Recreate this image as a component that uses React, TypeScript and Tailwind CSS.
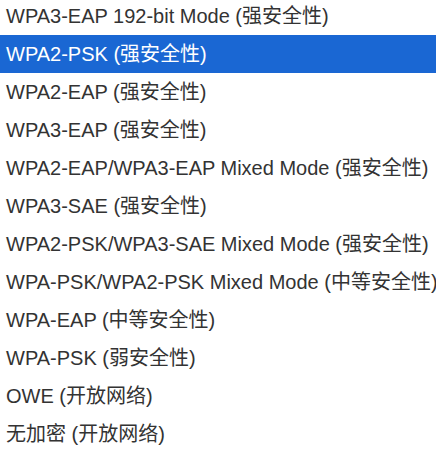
import React from 'react';

const options = [
  'WPA3-EAP 192-bit Mode (强安全性)',
  'WPA2-PSK (强安全性)',
  'WPA2-EAP (强安全性)',
  'WPA3-EAP (强安全性)',
  'WPA2-EAP/WPA3-EAP Mixed Mode (强安全性)',
  'WPA3-SAE (强安全性)',
  'WPA2-PSK/WPA3-SAE Mixed Mode (强安全性)',
  'WPA-PSK/WPA2-PSK Mixed Mode (中等安全性)',
  'WPA-EAP (中等安全性)',
  'WPA-PSK (弱安全性)',
  'OWE (开放网络)',
  '无加密 (开放网络)',
];

export default function App() {
  const selected = 1;
  return (
    <div className="w-[436px] h-[453px] overflow-hidden bg-white font-['Liberation_Sans','Noto_Sans_CJK_SC',sans-serif]">
      <ul className="-mt-[3px] flex flex-col">
        {options.map((opt, i) => (
          <li
            key={opt}
            className={
              i === selected
                ? 'h-[38px] flex items-center pl-[6px] whitespace-nowrap text-[20px] bg-[#1a67d3] text-white'
                : 'h-[38px] flex items-center pl-[6px] whitespace-nowrap text-[20px] text-[#333333]'
            }
          >
            {opt}
          </li>
        ))}
      </ul>
    </div>
  );
}
